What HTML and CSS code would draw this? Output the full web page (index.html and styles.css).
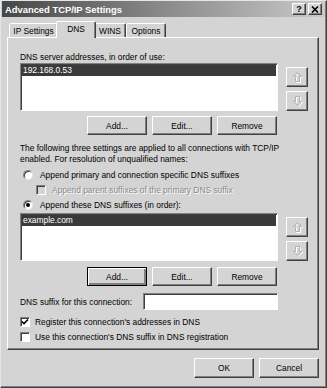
FILE: index.html
```html
<!DOCTYPE html>
<html>
<head>
<meta charset="utf-8">
<title>Advanced TCP/IP Settings</title>
<link rel="stylesheet" href="styles.css">
</head>
<body>
<div class="window">
  <div class="titlebar">
    <span class="title">Advanced TCP/IP Settings</span>
    <div class="tbtns">
      <span class="tbtn help">?</span>
      <span class="tbtn close"><svg width="8" height="7" viewBox="0 0 8 7"><path d="M1 0.5 L7 6.5 M7 0.5 L1 6.5" stroke="#000" stroke-width="1.6"/></svg></span>
    </div>
  </div>
  <div class="content">
    <div class="tabs">
      <div class="tab t-ip">IP Settings</div>
      <div class="tab t-dns active">DNS</div>
      <div class="tab t-wins">WINS</div>
      <div class="tab t-opt">Options</div>
    </div>
    <div class="panel">
      <div class="label">DNS server addresses, in order of use:</div>
      <div class="listrow">
        <div class="listbox"><div class="item sel">192.168.0.53</div></div>
        <div class="arrows">
          <div class="abtn"><svg width="11" height="12" viewBox="0 0 11 12"><path d="M6.5 2.5 L10.5 6.5 L8.5 6.5 L8.5 11.5 L4.5 11.5 L4.5 6.5 L2.5 6.5 Z" fill="none" stroke="#fff"/><path d="M5.5 1.5 L9.5 5.5 L7.5 5.5 L7.5 10.5 L3.5 10.5 L3.5 5.5 L1.5 5.5 Z" fill="none" stroke="#b0b0b0"/></svg></div>
          <div class="abtn"><svg width="11" height="12" viewBox="0 0 11 12"><path d="M6.5 11.5 L10.5 7.5 L8.5 7.5 L8.5 2.5 L4.5 2.5 L4.5 7.5 L2.5 7.5 Z" fill="none" stroke="#fff"/><path d="M5.5 10.5 L9.5 6.5 L7.5 6.5 L7.5 1.5 L3.5 1.5 L3.5 6.5 L1.5 6.5 Z" fill="none" stroke="#b0b0b0"/></svg></div>
        </div>
      </div>
      <div class="btnrow">
        <div class="btn">Add...</div>
        <div class="btn">Edit...</div>
        <div class="btn">Remove</div>
      </div>
      <p class="para">The following three settings are applied to all connections with TCP/IP<br>enabled. For resolution of unqualified names:</p>
      <div class="opt radio-row">
        <span class="radio"></span><span>Append primary and connection specific DNS suffixes</span>
      </div>
      <div class="opt sub disabled">
        <span class="check off"></span><span class="dtext">Append parent suffixes of the primary DNS suffix</span>
      </div>
      <div class="opt radio-row">
        <span class="radio on"></span><span>Append these DNS suffixes (in order):</span>
      </div>
      <div class="listrow list2">
        <div class="listbox"><div class="item sel">example.com</div></div>
        <div class="arrows">
          <div class="abtn"><svg width="11" height="12" viewBox="0 0 11 12"><path d="M6.5 2.5 L10.5 6.5 L8.5 6.5 L8.5 11.5 L4.5 11.5 L4.5 6.5 L2.5 6.5 Z" fill="none" stroke="#fff"/><path d="M5.5 1.5 L9.5 5.5 L7.5 5.5 L7.5 10.5 L3.5 10.5 L3.5 5.5 L1.5 5.5 Z" fill="none" stroke="#b0b0b0"/></svg></div>
          <div class="abtn"><svg width="11" height="12" viewBox="0 0 11 12"><path d="M6.5 11.5 L10.5 7.5 L8.5 7.5 L8.5 2.5 L4.5 2.5 L4.5 7.5 L2.5 7.5 Z" fill="none" stroke="#fff"/><path d="M5.5 10.5 L9.5 6.5 L7.5 6.5 L7.5 1.5 L3.5 1.5 L3.5 6.5 L1.5 6.5 Z" fill="none" stroke="#b0b0b0"/></svg></div>
        </div>
      </div>
      <div class="btnrow row2">
        <div class="btn default">Add...</div>
        <div class="btn">Edit...</div>
        <div class="btn">Remove</div>
      </div>
      <div class="suffix">
        <span>DNS suffix for this connection:</span>
        <div class="input"></div>
      </div>
      <div class="opt cb-row first">
        <span class="check on"><svg width="8" height="8" viewBox="0 0 8 8"><path d="M1 3.5 L3 5.5 L7 1.5" fill="none" stroke="#000" stroke-width="1.6"/></svg></span><span>Register this connection's addresses in DNS</span>
      </div>
      <div class="opt cb-row">
        <span class="check"></span><span>Use this connection's DNS suffix in DNS registration</span>
      </div>
    </div>
    <div class="footer">
      <div class="btn">OK</div>
      <div class="btn">Cancel</div>
    </div>
  </div>
</div>
</body>
</html>
```

FILE: styles.css
```css
html, body {
  margin: 0;
  padding: 0;
  background: #d4d4d4;
}
body {
  font-family: "Liberation Sans", Arial, sans-serif;
  font-size: 8.4px;
  color: #000;
}
.window {
  width: 327px;
  height: 388px;
  box-sizing: border-box;
  border: 1px solid;
  border-color: #e6e6e6 #404040 #404040 #e6e6e6;
  box-shadow: inset -1px -1px #808080;
  background: #d4d4d4;
  display: flex;
  flex-direction: column;
}
.titlebar {
  height: 16px;
  margin: 0 1px;
  background: linear-gradient(90deg, #474747 0%, #8a8a8a 50%, #c9c9c9 100%);
  display: flex;
  align-items: center;
  justify-content: space-between;
  padding: 0 3px 0 3px;
}
.title {
  color: #fff;
  font-weight: bold;
  font-size: 9.4px;
}
.tbtns {
  display: flex;
  gap: 2px;
}
.tbtn {
  width: 14px;
  height: 12px;
  box-sizing: border-box;
  background: #d4d4d4;
  border: 1px solid;
  border-color: #fff #404040 #404040 #fff;
  box-shadow: inset -1px -1px #808080;
  display: flex;
  align-items: center;
  justify-content: center;
  font-weight: bold;
  font-size: 9px;
  line-height: 1;
}
.content {
  flex: 1;
  padding: 4px 7px 0 6px;
  display: flex;
  flex-direction: column;
}
.tabs {
  display: flex;
  align-items: flex-end;
  height: 16px;
  padding-left: 2px;
  position: relative;
  z-index: 1;
}
.tab {
  height: 14px;
  box-sizing: border-box;
  padding-top: 2px;
  border: 1px solid;
  border-bottom: none;
  border-color: #fff #404040 transparent #fff;
  border-radius: 2px 2px 0 0;
  box-shadow: inset -1px 0 #808080;
  background: #d4d4d4;
  line-height: 11px;
  text-align: center;
}
.t-ip { width: 49px; }
.t-dns { width: 36px; }
.t-wins { width: 32px; }
.t-opt { width: 40px; }
.tab.active {
  width: 40px;
  height: 17px;
  margin: 0 -2px -1px -2px;
  position: relative;
  z-index: 2;
}
.panel {
  height: 313px;
  box-sizing: border-box;
  border: 1px solid;
  border-color: #fff #404040 #404040 #fff;
  box-shadow: inset -1px -1px #808080;
  padding: 14px 0 0 12px;
  display: flex;
  flex-direction: column;
}
.label {
  line-height: 10px;
}
.listrow {
  display: flex;
  margin-top: 1px;
}
.listbox {
  width: 258px;
  height: 48px;
  box-sizing: border-box;
  background: #fff;
  border: 1px solid;
  border-color: #808080 #fff #fff #808080;
  box-shadow: inset 1px 1px #404040;
  padding: 1px 1px 0 1px;
}
.item {
  height: 11px;
  line-height: 11px;
  padding-left: 1px;
}
.item.sel {
  background: #3a3a3a;
  color: #fff;
}
.arrows {
  margin-left: 8px;
  padding-top: 4px;
  display: flex;
  flex-direction: column;
  gap: 4px;
}
.abtn {
  width: 22px;
  height: 20px;
  box-sizing: border-box;
  border: 1px solid;
  border-color: #fff #404040 #404040 #fff;
  box-shadow: inset -1px -1px #808080;
  display: flex;
  align-items: center;
  justify-content: center;
}
.btnrow {
  display: flex;
  gap: 5px;
  margin-top: 5px;
  padding-left: 67px;
}
.btn {
  width: 60px;
  height: 19px;
  box-sizing: border-box;
  border: 1px solid;
  border-color: #fff #404040 #404040 #fff;
  box-shadow: inset -1px -1px #808080;
  display: flex;
  align-items: center;
  justify-content: center;
  background: #d4d4d4;
}
.btn.default {
  border-color: #000;
  box-shadow: inset 1px 1px #fff, inset -2px -2px #808080, inset -1px -1px #404040;
}
.para {
  margin: 8px 0 0 0;
  line-height: 11px;
}
.opt {
  display: flex;
  align-items: center;
  height: 12px;
}
.radio-row {
  margin-top: 4px;
  padding-left: 3px;
}
.radio {
  width: 10px;
  height: 10px;
  box-sizing: border-box;
  border-radius: 50%;
  background: #fff;
  border: 1px solid;
  border-color: #808080 #e8e8e8 #e8e8e8 #808080;
  box-shadow: inset 1px 1px #404040;
  margin-right: 7px;
  display: flex;
  align-items: center;
  justify-content: center;
}
.radio.on::after {
  content: "";
  width: 4px;
  height: 4px;
  border-radius: 50%;
  background: #000;
}
.sub {
  margin-top: 3px;
  padding-left: 16px;
}
.radio-row + .radio-row,
.sub + .radio-row {
  margin-top: 3px;
}
.check {
  width: 10px;
  height: 10px;
  box-sizing: border-box;
  background: #fff;
  border: 1px solid;
  border-color: #808080 #fff #fff #808080;
  box-shadow: inset 1px 1px #404040;
  margin-right: 6px;
  display: flex;
  align-items: center;
  justify-content: center;
}
.check.off {
  background: #d4d4d4;
}
.dtext {
  color: #8a8a8a;
  text-shadow: 1px 1px 0 #fff;
}
.list2 {
  margin-top: 2px;
}
.row2 {
  margin-top: 6px;
}
.suffix {
  display: flex;
  align-items: center;
  margin-top: 7px;
}
.suffix span {
  width: 123px;
}
.input {
  width: 135px;
  height: 17px;
  box-sizing: border-box;
  background: #fff;
  border: 1px solid;
  border-color: #808080 #fff #fff #808080;
  box-shadow: inset 1px 1px #404040;
}
.cb-row {
  margin-top: 4px;
  height: 11px;
}
.cb-row.first {
  margin-top: 6px;
}
.cb-row .check {
  margin-right: 5px;
}
.footer {
  display: flex;
  justify-content: flex-end;
  gap: 5px;
  margin-top: 8px;
}
.footer .btn {
  height: 20px;
}
```
